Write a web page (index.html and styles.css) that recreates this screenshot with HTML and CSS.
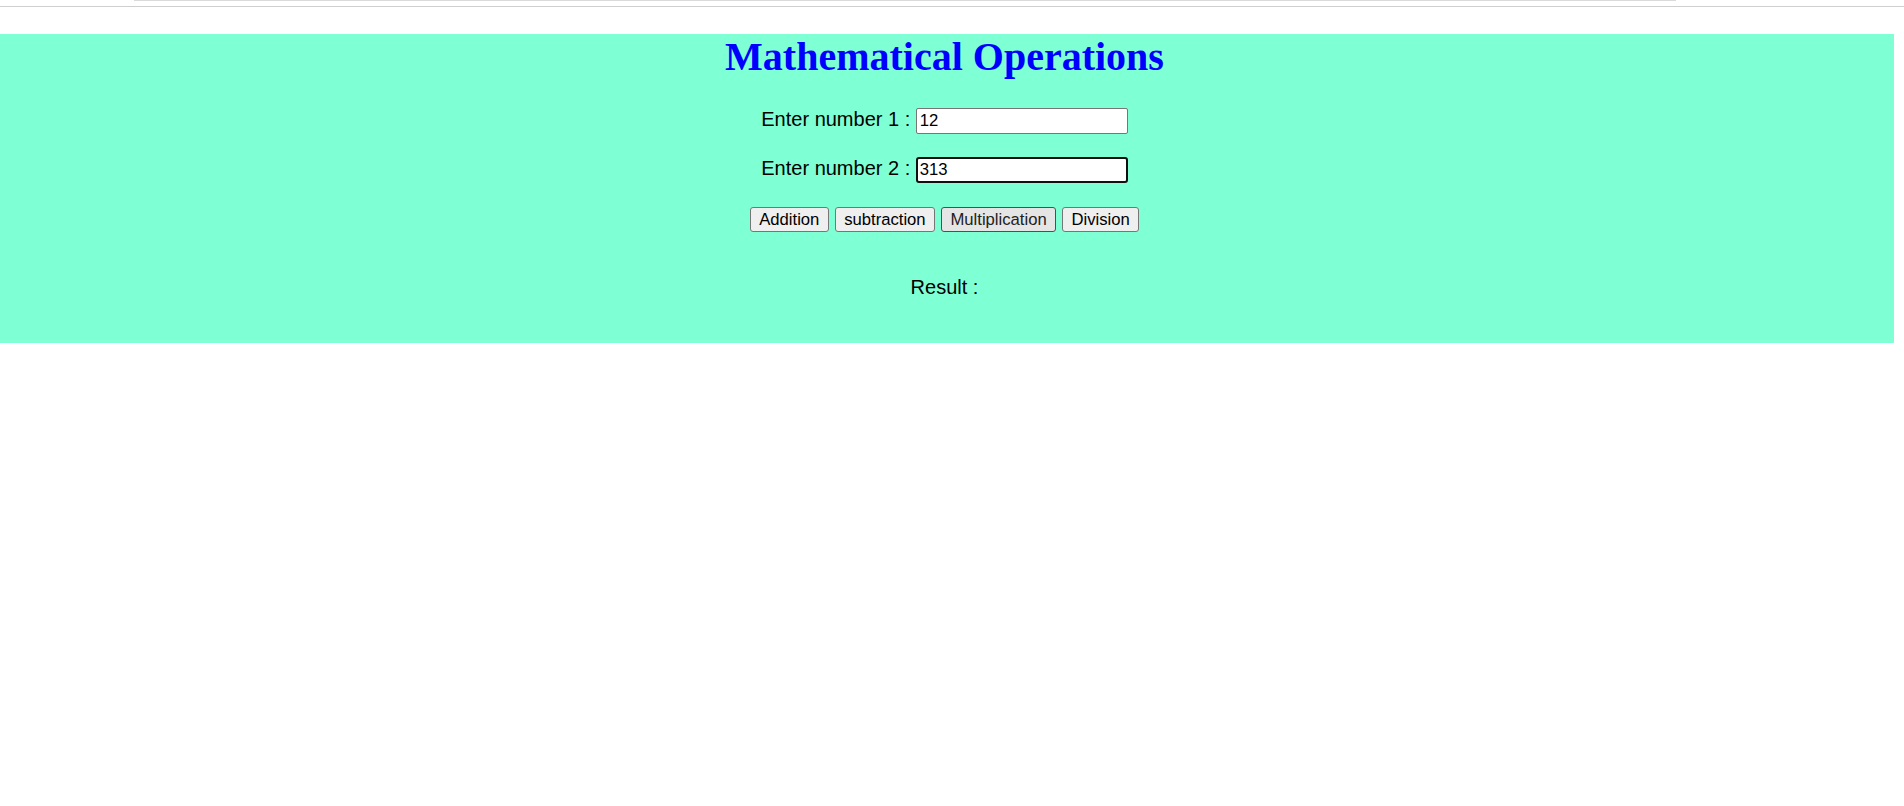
FILE: index.html
```html
<!DOCTYPE html>
<html lang="en">
<head>
<meta charset="utf-8">
<title>Mathematical Operations</title>
<link rel="stylesheet" href="styles.css">
</head>
<body>
<div class="top">
  <div class="top-edge"></div>
</div>
<div class="rule"></div>
<div class="panel">
  <h1 class="title">Mathematical Operations</h1>
  <div class="row row-first">
    <label class="label" for="n1">Enter number 1 :</label>
    <input class="field" id="n1" type="text" value="12">
  </div>
  <div class="row row-second">
    <label class="label" for="n2">Enter number 2 :</label>
    <input class="field field-focus" id="n2" type="text" value="313">
  </div>
  <div class="buttons">
    <button class="btn" type="button">Addition</button>
    <button class="btn" type="button">subtraction</button>
    <button class="btn btn-hover" type="button">Multiplication</button>
    <button class="btn" type="button">Division</button>
  </div>
  <p class="result">Result :</p>
</div>
</body>
</html>
```
FILE: styles.css
```css
html, body {
  margin: 0;
  padding: 0;
  background: #ffffff;
}

body {
  width: 1904px;
  font-family: "Liberation Sans", Arial, sans-serif;
  color: #000000;
}

.top {
  height: 6px;
  padding: 0 228px 0 134px;
}

.top-edge {
  height: 1px;
  background: #dadada;
}

.rule {
  height: 1px;
  background: #cfcfcf;
  margin-bottom: 27px;
}

.panel {
  width: 1889px;
  padding: 0 5px 44px 0;
  background: #7fffd4;
  display: flex;
  flex-direction: column;
  align-items: center;
}

.title {
  margin: 0;
  height: 46px;
  line-height: 46px;
  font-family: "Liberation Serif", "Times New Roman", serif;
  font-weight: bold;
  font-size: 40px;
  color: #0000ff;
}

.row {
  display: flex;
  align-items: flex-start;
  height: 26px;
}

.row-first {
  margin-top: 28px;
}

.row-second {
  margin-top: 23px;
}

.label {
  font-size: 20px;
  line-height: 23px;
  margin-right: 5.5px;
}

.field {
  box-sizing: border-box;
  width: 212px;
  height: 26px;
  margin: 0;
  padding: 1px 3px;
  border: 1px solid #767676;
  border-radius: 2px;
  background: #ffffff;
  font-family: "Liberation Sans", Arial, sans-serif;
  font-size: 16.67px;
  color: #000000;
  outline: none;
}

.field-focus {
  border: 2px solid #101010;
  border-radius: 3px;
  padding: 0 2px;
}

.buttons {
  display: flex;
  gap: 6px;
  margin-top: 24px;
}

.btn {
  box-sizing: border-box;
  height: 25px;
  margin: 0;
  padding: 0 8.4px;
  border: 1px solid #767676;
  border-radius: 3px;
  background: #efefef;
  font-family: "Liberation Sans", Arial, sans-serif;
  font-size: 16.67px;
  color: #000000;
  line-height: 22px;
}

.btn-hover {
  background: #e5e5e5;
  border-color: #4f4f4f;
  color: #222222;
}

.result {
  margin: 44px 0 0 0;
  font-size: 20px;
  line-height: 23px;
}
```
